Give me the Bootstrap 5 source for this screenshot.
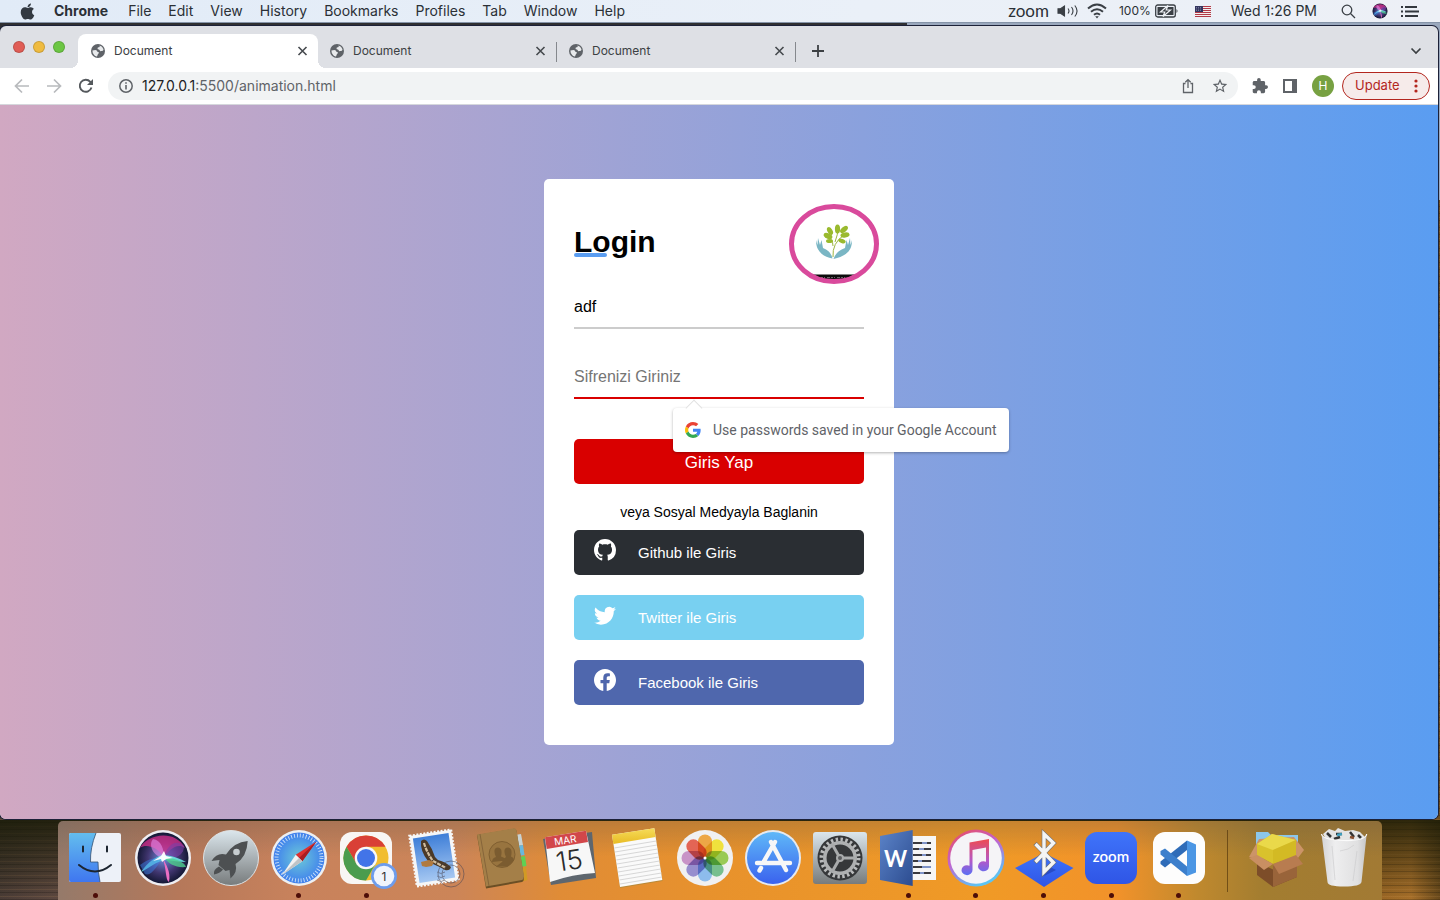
<!DOCTYPE html>
<html lang="tr">
<head>
<meta charset="utf-8">
<meta name="viewport" content="width=device-width, initial-scale=1">
<title>Document</title>
<link href="https://cdn.jsdelivr.net/npm/bootstrap@5.3.0/dist/css/bootstrap.min.css" rel="stylesheet">
<style>
  :root { --ui: Inter, "Liberation Sans", sans-serif; --page: "Liberation Sans", Arial, sans-serif; }
  body { font-family: var(--ui); background: #3a2a1c; }
  svg { display: block; flex: none; }
  button { font-family: inherit; }

  .desktop {
    background:
      linear-gradient(#2f2f31, #2f2f31) 0 0 / 63% 60px no-repeat,
      linear-gradient(#9aa8bd, #9aa8bd) 0 0 / 100% 200px no-repeat,
      linear-gradient(180deg, rgba(24,26,6,.85), rgba(24,26,6,0)) 0 100% / 100% 80px no-repeat,
      repeating-linear-gradient(0deg, rgba(0,0,0,.2) 0 1px, transparent 1px 3px, rgba(255,190,120,.1) 3px 4px, transparent 4px 7px),
      linear-gradient(90deg, #4a3c36 0, #5d4840 4%, #8d6a50 20%, #7a5016 90%, #a8702a 98%, #6a4a1c 100%);
  }

  /* menu bar */
  .menubar { height: 23px; background: linear-gradient(90deg, #e1ebf7, #eaf0f8 60%, #edf0f6); border-bottom: 1px solid #8594a8; font-size: 14px; line-height: 22px; color: #2b3036; }
  .menubar a { color: inherit; text-decoration: none; }
  .menus { gap: 17px; }
  .apple-menu { padding-right: 2px; }
  .app-name { font-weight: 700; padding-right: 3px; }
  .zoom-word { font-family: Lato, sans-serif; font-size: 17px; line-height: 20px; }
  .charge { font-size: 12px; }

  /* browser window */
  .browser { margin: 3px 2px 2px 0; border-radius: 6px; background: #dee0e5; overflow: hidden; box-shadow: 0 0 0 1px #1c2138; }
  .tabstrip { height: 42px; }
  .lights { width: 78px; padding: 15px 0 0 13px; gap: 8px; }
  .light { width: 12px; height: 12px; border-radius: 50%; border: 1px solid rgba(0,0,0,.15); }
  .tab-item { width: 239px; height: 34px; padding: 0 10px 0 13px; gap: 9px; font-size: 12px; color: #3c4043; position: relative; }
  .tab-item.current { background: #fff; border-radius: 8px 8px 0 0; width: 240px; margin-right: -1px; }
  .tab-item.current::before, .tab-item.current::after { content: ""; position: absolute; bottom: 0; width: 8px; height: 8px; }
  .tab-item.current::before { left: -8px; background: radial-gradient(circle at 0 0, transparent 8px, #fff 8px); }
  .tab-item.current::after { right: -8px; background: radial-gradient(circle at 100% 0, transparent 8px, #fff 8px); }
  .tab-item.ruled::after { content: ""; position: absolute; right: -1px; top: 8px; width: 1px; height: 20px; background: #85888d; }
  .bare { border: 0; background: none; padding: 0; color: #45494d; display: flex; align-items: center; justify-content: center; }

  .toolbar { height: 37px; background: #fff; border-bottom: 1px solid #d5d7dc; padding: 4px 8px 4px 14px; }
  .omnibox { height: 28px; border-radius: 14px; background: #f1f3f4; padding: 0 10px; margin-left: 14px; }
  .omnibox .url { font-size: 14px; color: #5f6368; line-height: 28px; }
  .omnibox .host { color: #202124; }
  .actions { gap: 15px; padding-left: 14px; }
  .avatar { width: 22px; height: 22px; border-radius: 50%; background: #77a142; color: #fff; font-size: 12px; }
  .update { width: 88px; height: 28px; border: 1px solid #b3261e; border-radius: 14px; background: #f6ebea; color: #b3261e; font-size: 13px; padding: 0 8px 0 12px; }

  /* login page */
  .viewport { background: linear-gradient(90deg, #d1a8c2 0, #8aa1dd 60%, #5a9df1 100%); font-family: var(--page); padding: 24px 0; }
  .login-box { width: 350px; padding: 45px 30px 40px; border-radius: 5px; background: #fff; position: relative; color: #000; }
  .login-title { font-size: 30px; font-weight: 700; line-height: 36px; margin: 0 0 27px; position: relative; }
  .login-title::before { content: ""; position: absolute; left: 0; bottom: 3px; width: 33px; height: 4px; border-radius: 3px; background: #5a9df1; }
  .brand-mark { position: absolute; top: 25px; right: 15px; width: 90px; height: 80px; }
  .line-field { display: block; width: 100%; height: 42px; border: 0; border-bottom: 2px solid #ccc; padding: 0; font-size: 16px; color: #000; outline: 0; background: none; border-radius: 0; }
  .line-field::placeholder { color: #757575; opacity: 1; }
  .second { margin: 28px 0 40px; position: relative; }
  .second .line-field { border-color: #d90000; }
  .submit { height: 45px; border: 0; border-radius: 5px; background: #d90000; color: #fff; font-size: 17px; padding: 2px 0 0; }
  .or-text { font-size: 14px; line-height: 20px; margin: 18px 0 8px; }
  .socials { gap: 20px; }
  .social { height: 45px; border-radius: 5px; color: #fff; text-decoration: none; font-size: 15px; padding: 2px 20px 0; gap: 22px; }
  .social:hover { color: #fff; }
  .social svg { margin-bottom: 8px; }
  .github { background: #2a2e33; } .twitter { background: #78d0f1; } .facebook { background: #4f67ad; }
  .pass-tip { position: absolute; left: 99px; top: 51px; width: 336px; height: 44px; border-radius: 4px; background: #fff; font-family: Roboto, var(--ui); font-size: 14px; color: #5f6368; padding: 0 12px; gap: 12px; box-shadow: 0 1px 3px rgba(0,0,0,.3); white-space: nowrap; z-index: 2; }
  .pass-tip::before { content: ""; position: absolute; left: 15px; top: -6px; width: 12px; height: 12px; background: #fff; border: solid #e2e2e2; border-width: 1px 0 0 1px; transform: rotate(45deg); }

  /* dock */
  .dock { width: 92%; padding: 5px 4px 2px; border-radius: 5px 5px 0 0; background: linear-gradient(180deg, rgba(90,80,70,.28), transparent 45%), linear-gradient(90deg, #957a6a 0, #b5785a 9%, #c8825c 18%, #cc8558 30%, #e08c36 38%, #e8922c 50%, #f09a26 70%, #f2922a 80%, #c0892e 86%, #a37d30 91%, #a27a34 100%); }
  .dock-cell { flex: 1 1 0; min-width: 0; }
  .dock-cell button { display: block; border: 0; background: none; padding: 0; }
  .dot { width: 5px; height: 5px; border-radius: 50%; margin-top: 3px; }
  .running .dot { background: #4d0d08; }
  .divider { width: 30px; padding: 4px 0 6px; }
  .divider span { width: 1px; background: rgba(80,50,10,.65); }
</style>
</head>
<body>
<svg width="0" height="0" class="position-absolute" aria-hidden="true">
  <defs>
    <symbol id="globe" viewBox="0 0 14 14"><circle cx="7" cy="7" r="7" fill="#5f6368"/><path d="M1.400 6.500L4.500 6q1.600.2 1.900 1.700l1.400.6q.4 1-.8 1.600l-1 2.500q-1.600.2-2.700-1.100Q1.300 9.500 1.400 6.500z" fill="#e8eaec"/><path d="M8.500 1.500q3 .7 4 3.700l-.5 1.600-2.700.4-1-1.500L6.500 5l.3-1.500 1.900-.6z" fill="#e8eaec"/></symbol>
    <symbol id="close" viewBox="0 0 10 10"><path d="M1 1l8 8M9 1L1 9" stroke="#45494d" stroke-width="1.600"/></symbol>
    <symbol id="siri" viewBox="0 0 64 64">
      <circle cx="32" cy="32" r="28" fill="#efeef2"/><circle cx="32" cy="32" r="25.500" fill="url(#siriBg)"/>
      <path d="M9 22C16 8 44 3 54 22 46 16 38 24 33 31 25 20 15 18 9 22z" fill="#d82f8c" opacity=".75"/>
      <path d="M22 13C30 14 34 24 32 32 22 30 17 19 22 13z" fill="#e58bea" opacity=".6"/>
      <path d="M32 31C38 17 45 13 53 20 53 30 43 34 32 31z" fill="#7a3fa8" opacity=".6"/>
      <path d="M10 46C17 36 25 30 33 29 42 30 50 33 55 36 46 36 39 34 33 34 25 36 18 42 10 46z" fill="#6cf0e6" opacity=".85"/>
      <path d="M31 31C35 38 40 46 38 56 34 54 36 42 31 31z" fill="#ec6fc4"/>
      <path d="M33 31C43 32 54 36 55 41 45 42 37 38 33 31z" fill="#4fd08f" opacity=".8"/>
      <path d="M9 39C18 32 27 31 32 31 28 37 21 51 14 48z" fill="#3c7fe8" opacity=".5"/>
      <path d="M33 25l2 5 7 2-7 1-4 3-1-3-8 2 8-5z" fill="#fff" opacity=".95"/>
    </symbol>
    <radialGradient id="siriBg"><stop offset="0" stop-color="#6e8fe0"/><stop offset=".6" stop-color="#40356f"/><stop offset="1" stop-color="#141835"/></radialGradient>
    <linearGradient id="finderL" x2="0" y2="1"><stop stop-color="#63bdee"/><stop offset="1" stop-color="#3f76f0"/></linearGradient>
    <linearGradient id="grey" x2="0" y2="1"><stop stop-color="#dbe6ec"/><stop offset="1" stop-color="#777b7c"/></linearGradient>
    <radialGradient id="safari"><stop stop-color="#6cc9d8"/><stop offset="1" stop-color="#3f7fee"/></radialGradient>
    <linearGradient id="sky" x2="0" y2="1"><stop stop-color="#3f7fd8"/><stop offset="1" stop-color="#a6c8f2"/></linearGradient>
    <linearGradient id="yellow" x2="0" y2="1"><stop stop-color="#f6dc5a"/><stop offset="1" stop-color="#e8bb24"/></linearGradient>
    <linearGradient id="blue" x2="0" y2="1"><stop stop-color="#5fb8f8"/><stop offset="1" stop-color="#3a62ee"/></linearGradient>
    <linearGradient id="zoomBlue" x2="0" y2="1"><stop stop-color="#3f74fa"/><stop offset="1" stop-color="#2f55e6"/></linearGradient>
    <linearGradient id="word" x2="1" y2="1"><stop stop-color="#5b83c8"/><stop offset="1" stop-color="#2c4c90"/></linearGradient>
    <linearGradient id="ring" x2=".5" y2="1"><stop stop-color="#ee4a52"/><stop offset=".5" stop-color="#c163d0"/><stop offset="1" stop-color="#5cc4f4"/></linearGradient>
    <linearGradient id="note" x2="0" y2="1"><stop stop-color="#ee4c50"/><stop offset=".6" stop-color="#b458c8"/><stop offset="1" stop-color="#5a70f4"/></linearGradient>
    <linearGradient id="bin" x2="1"><stop stop-color="#d4d4d6"/><stop offset=".3" stop-color="#eeeeef"/><stop offset=".8" stop-color="#e0e0e1"/><stop offset="1" stop-color="#c6c6c8"/></linearGradient>
  </defs>
</svg>

<div class="desktop d-flex flex-column min-vh-100">
  <header class="menubar d-flex align-items-center justify-content-between">
    <nav class="menus d-flex align-items-center" aria-label="Menu bar">
      <a href="#" class="apple-menu ms-3 ps-1" aria-label="Apple"><svg width="15" height="17" viewBox="0 20 384 472"><path fill="#333a42" d="M318.700 268.700c-.2-36.700 16.400-64.400 50-84.800-18.800-26.900-47.200-41.700-84.700-44.600-35.500-2.800-74.300 20.700-88.500 20.700-15 0-49.400-19.700-76.400-19.700C63.300 141.200 4 184.800 4 273.500q0 39.300 14.400 81.200c12.800 36.700 59 126.700 107.200 125.200 25.200-.6 43-17.900 75.800-17.900 31.800 0 48.300 17.900 76.400 17.900 48.600-.7 90.400-82.500 102.600-119.300-65.200-30.700-61.700-90-61.700-91.900zm-56.600-164.200c27.300-32.400 24.800-61.900 24-72.500-24.100 1.400-52 16.400-67.900 34.900-17.500 19.800-27.800 44.300-25.600 71.900 26.100 2 49.900-11.400 69.500-34.300z"/></svg></a>
      <a href="#" class="app-name">Chrome</a>
      <a href="#">File</a><a href="#">Edit</a><a href="#">View</a><a href="#">History</a><a href="#">Bookmarks</a><a href="#">Profiles</a><a href="#">Tab</a><a href="#">Window</a><a href="#">Help</a>
    </nav>
    <div class="d-flex align-items-center pe-3">
      <span class="zoom-word">zoom</span>
      <svg class="ms-2" width="22" height="16" viewBox="0 0 22 16" fill="none" stroke="#3a3f45" stroke-width="1.100"><path d="M1 5.800h2.500L7.500 3v10l-4-2.800H1z" fill="#3a3f45"/><path d="M11 5.500q2 2.500 0 5M14.500 4q3 4 0 8M17.800 2.500q4.500 5.500 0 11"/></svg>
      <svg class="ms-2" width="20" height="16" viewBox="0 0 20 16" fill="none" stroke="#3a3f45" stroke-width="2"><path d="M1 5.500q9-8 18 0M4 8.700q6-5 12 0M7 11.700q3-2.500 6 0"/><path d="M8.200 13.200h3.600L10 15.500z" fill="#3a3f45" stroke="none"/></svg>
      <span class="charge ms-2 ps-1">100%</span>
      <svg class="ms-1" width="24" height="14" viewBox="0 0 24 14"><rect x=".7" y="1" width="19.600" height="12" rx="2" fill="none" stroke="#3a3f45" stroke-width="1.300"/><rect x="2.500" y="3" width="16" height="8" fill="#3a3f45"/><path d="M13 1.500L5.500 8h4.300L8 12.500 15.500 6h-4.300z" fill="#3a3f45" stroke="#eef1f6" stroke-width="1.200"/><path d="M21.500 5q2 2 0 4" fill="#3a3f45"/></svg>
      <svg class="ms-3" width="16" height="11" viewBox="0 0 16 11"><path fill="#f3eeee" d="M0 0h16v11H0z"/><path d="M0 .5h16M0 2.500h16M0 4.500h16M0 6.500h16M0 8.500h16M0 10.500h16" stroke="#b23a48"/><path fill="#34365f" d="M0 0h8v6H0z"/><path d="M1 1.500h6M1 3h6M1 4.500h6" stroke="#9da0bd" stroke-width=".6" stroke-dasharray="1 1"/></svg>
      <span class="ms-3 ps-1">Wed 1:26 PM</span>
      <svg class="ms-4" width="15" height="15" viewBox="0 0 15 15" fill="none" stroke="#3a3f45" stroke-width="1.300"><circle cx="6" cy="6" r="4.800"/><path d="M9.500 9.500L14 14"/></svg>
      <svg class="ms-3" width="16" height="16" viewBox="5 5 54 54"><use href="#siri" width="64" height="64"/></svg>
      <svg class="ms-2 ps-1" width="24" height="13" viewBox="0 0 20 13" stroke="#33383e" stroke-width="1.900"><path d="M1 2h2M1 6.500h2M1 11h2M5 2h12M5 6.500h14M5 11h13"/></svg>
      <span class="pe-1"></span>
    </div>
  </header>

  <main class="browser flex-grow-1 d-flex flex-column">
    <div class="tabstrip d-flex">
      <div class="lights d-flex"><span class="light" style="background:#e05d56"></span><span class="light" style="background:#efbb40"></span><span class="light" style="background:#6cc644"></span></div>
      <div class="d-flex align-items-end">
        <div class="tab-item current d-flex align-items-center"><svg width="14" height="14"><use href="#globe"/></svg><span class="flex-grow-1">Document</span><button class="bare" aria-label="Close tab"><svg width="11" height="10"><use href="#close"/></svg></button></div>
        <div class="tab-item ruled d-flex align-items-center"><svg width="14" height="14"><use href="#globe"/></svg><span class="flex-grow-1">Document</span><button class="bare" aria-label="Close tab"><svg width="11" height="10"><use href="#close"/></svg></button></div>
        <div class="tab-item ruled d-flex align-items-center"><svg width="14" height="14"><use href="#globe"/></svg><span class="flex-grow-1">Document</span><button class="bare" aria-label="Close tab"><svg width="11" height="10"><use href="#close"/></svg></button></div>
      </div>
      <button class="bare ms-3 mt-2" aria-label="New tab"><svg width="14" height="14" viewBox="0 0 14 14"><path d="M7 1v12M1 7h12" stroke="#3c4043" stroke-width="1.800"/></svg></button>
      <button class="bare ms-auto me-3 mt-2" aria-label="Search tabs"><svg width="12" height="8" viewBox="0 0 12 8" fill="none"><path d="M1.500 1.500L6 6l4.500-4.500" stroke="#3c4043" stroke-width="1.700"/></svg></button>
    </div>

    <div class="toolbar d-flex align-items-center">
      <button class="bare" aria-label="Back"><svg width="16" height="16" viewBox="0 0 16 16" fill="none" stroke="#b8babd" stroke-width="1.700"><path d="M15 8H2M8 1.500L1.500 8 8 14.500"/></svg></button>
      <button class="bare ms-3" aria-label="Forward"><svg width="16" height="16" viewBox="0 0 16 16" fill="none" stroke="#b8babd" stroke-width="1.700"><path d="M1 8h13M8 1.500L14.500 8 8 14.500"/></svg></button>
      <button class="bare ms-3" aria-label="Reload"><svg width="16" height="16" viewBox="0 0 16 16" fill="none"><path d="M13.500 9.500A6 6 0 1 1 12.300 3.800L14 5.500" stroke="#55595d" stroke-width="1.900"/><path d="M15 1v6H9z" fill="#55595d"/></svg></button>
      <div class="omnibox flex-grow-1 d-flex align-items-center">
        <svg width="16" height="16" viewBox="0 0 16 16"><circle cx="8" cy="8" r="6.200" fill="none" stroke="#5f6368" stroke-width="1.500"/><path d="M8 7v4.500M8 4.200v1.600" stroke="#5f6368" stroke-width="1.600"/></svg>
        <a href="#" class="url ms-2 me-auto text-decoration-none"><span class="host">127.0.0.1</span>:5500/animation.html</a>
        <button class="bare" aria-label="Share"><svg width="16" height="16" viewBox="0 0 16 16" fill="none" stroke="#5f6368" stroke-width="1.300"><path d="M5.500 5.500h-2v9h9v-9h-2M8 10V1.800M5.300 4.300L8 1.600l2.700 2.700"/></svg></button>
        <button class="bare ms-3" aria-label="Bookmark"><svg width="16" height="16" viewBox="1 1 22 22"><path fill="#5f6368" d="M22 9.240l-7.190-.62L12 2 9.190 8.630 2 9.240l5.460 4.730L5.820 21 12 17.270 18.180 21l-1.630-7.030L22 9.240zM12 15.400l-3.760 2.270 1-4.280-3.320-2.880 4.380-.38L12 6.100l1.710 4.040 4.380.38-3.320 2.880 1 4.280L12 15.400z"/></svg></button>
      </div>
      <div class="actions d-flex align-items-center">
        <button class="bare" aria-label="Extensions"><svg width="16" height="16" viewBox="1 1 22 22"><path fill="#5f6368" d="M20.500 11H19V7c0-1.100-.9-2-2-2h-4V3.500a2.500 2.500 0 0 0-5 0V5H4c-1.100 0-2 .9-2 2v3.800h1.500a2.700 2.700 0 0 1 0 5.400H2V20c0 1.100.9 2 2 2h3.800v-1.500a2.700 2.700 0 0 1 5.400 0V22H17c1.100 0 2-.9 2-2v-4h1.500a2.500 2.500 0 0 0 0-5z"/></svg></button>
        <button class="bare" aria-label="Side panel"><svg width="14" height="14" viewBox="0 0 14 14"><path fill="#5f6368" d="M0 0h14v14H0zM2 2v10h7V2z" fill-rule="evenodd"/></svg></button>
        <button class="bare avatar text-white" aria-label="Profile">H</button>
      </div>
      <button class="update d-flex align-items-center justify-content-between ms-2">Update<svg width="10" height="14" viewBox="0 0 10 14" fill="#b3261e"><circle cx="5" cy="2" r="1.600"/><circle cx="5" cy="7" r="1.600"/><circle cx="5" cy="12" r="1.600"/></svg></button>
    </div>

    <section class="viewport flex-grow-1 d-flex align-items-center justify-content-center">
      <form class="login-box">
        <h1 class="login-title"><span class="position-relative">Login</span></h1>
        <svg class="brand-mark" viewBox="0 0 90 80" role="img" aria-label="Logo">
          <clipPath id="oval"><ellipse cx="45" cy="40" rx="41" ry="36"/></clipPath>
          <ellipse cx="45" cy="40" rx="42" ry="37" fill="#fff"/>
          <g clip-path="url(#oval)"><path d="M15 70.500h60V80H15z" fill="#0c0c0c"/><path d="M32 73.500h26" stroke="#666" stroke-width="1" stroke-dasharray="2 1 1 2 3 1"/></g>
          <ellipse cx="45" cy="40" rx="42.500" ry="37.500" fill="none" stroke="#d94a9c" stroke-width="5"/>
          <g fill="#7ab6c4"><path d="M27 36l1.500 5 .5-7 2 7 1.500-5 1.500 8q8 3 9.500 10.500-9-1.500-13-7-3.500-4-3.500-11.500z"/><path d="M63 36l-1.500 5-.5-7-2 7-1.500-5-1.500 8q-9 3-11.500 11 10-2 15-7.500 3.500-4 3.500-11.500z"/></g>
          <path d="M44 53q-1-14 11-22M44 42q0-8-8-11M46 38q3-8 3-13" stroke="#9db540" fill="none" stroke-width="1"/>
          <g fill="#9aba2e"><ellipse cx="48.500" cy="25" rx="2.600" ry="4.500"/><ellipse cx="41" cy="27" rx="2.500" ry="4.200" transform="rotate(-30 41 27)"/><ellipse cx="55" cy="25.500" rx="2.500" ry="4.600" transform="rotate(50 55 25.500)"/><ellipse cx="39" cy="32" rx="2.700" ry="4.600" transform="rotate(-65 39 32)"/><ellipse cx="56" cy="31" rx="2.600" ry="4.600" transform="rotate(80 56 31)"/><ellipse cx="40.500" cy="37" rx="2" ry="3.500" transform="rotate(-90 40.500 37)"/><ellipse cx="53" cy="37" rx="2" ry="3.800" transform="rotate(110 53 37)"/></g>
        </svg>
        <input class="line-field" type="text" value="adf" aria-label="Kullanici adi">
        <div class="second">
          <input class="line-field" type="password" placeholder="Sifrenizi Giriniz" aria-label="Sifre">
          <div class="pass-tip d-flex align-items-center">
            <svg width="16" height="16" viewBox="0 0 48 48"><path fill="#EA4335" d="M24 9.500c3.540 0 6.710 1.220 9.210 3.600l6.850-6.850C35.900 2.380 30.470 0 24 0 14.620 0 6.510 5.380 2.560 13.220l7.980 6.190C12.430 13.720 17.740 9.500 24 9.500z"/><path fill="#4285F4" d="M46.980 24.550c0-1.570-.15-3.090-.38-4.550H24v9.020h12.940c-.58 2.960-2.260 5.480-4.780 7.180l7.730 6c4.510-4.180 7.090-10.360 7.090-17.650z"/><path fill="#FBBC05" d="M10.530 28.590c-.48-1.450-.76-2.990-.76-4.590s.27-3.140.76-4.590l-7.980-6.190C.92 16.460 0 20.120 0 24c0 3.880.92 7.540 2.560 10.780l7.970-6.190z"/><path fill="#34A853" d="M24 48c6.480 0 11.930-2.130 15.890-5.810l-7.730-6c-2.150 1.450-4.920 2.300-8.160 2.300-6.260 0-11.570-4.220-13.470-9.910l-7.980 6.190C6.510 42.620 14.620 48 24 48z"/></svg>
            <span>Use passwords saved in your Google Account</span>
          </div>
        </div>
        <button type="submit" class="submit d-block w-100">Giris Yap</button>
        <p class="or-text text-center">veya Sosyal Medyayla Baglanin</p>
        <div class="socials d-flex flex-column">
          <a href="#" class="social github d-flex align-items-center"><svg width="22" height="22" viewBox="0 0 16 16" fill="#fff"><path d="M8 0C3.580 0 0 3.580 0 8c0 3.540 2.290 6.530 5.470 7.590.4.07.55-.17.55-.38 0-.19-.01-.82-.01-1.490-2.010.37-2.530-.49-2.690-.94-.09-.23-.48-.94-.82-1.130-.28-.15-.68-.52-.01-.53.63-.01 1.080.58 1.230.82.72 1.210 1.870.87 2.330.66.07-.52.28-.87.51-1.070-1.780-.2-3.640-.89-3.640-3.950 0-.87.31-1.590.82-2.150-.08-.2-.36-1.020.08-2.120 0 0 .67-.21 2.200.82.64-.18 1.320-.27 2-.27s1.360.09 2 .27c1.530-1.040 2.200-.82 2.200-.82.44 1.100.16 1.920.08 2.120.51.56.82 1.270.82 2.150 0 3.070-1.870 3.750-3.650 3.950.29.25.54.73.54 1.480 0 1.070-.01 1.930-.01 2.200 0 .21.15.46.55.38A8.010 8.010 0 0 0 16 8c0-4.420-3.580-8-8-8z"/></svg>Github ile Giris</a>
          <a href="#" class="social twitter d-flex align-items-center"><svg width="22" height="22" viewBox="0 0 16 16" fill="#fff"><path d="M5.026 15c6.038 0 9.341-5.003 9.341-9.334 0-.14 0-.282-.006-.422A6.685 6.685 0 0 0 16 3.542a6.658 6.658 0 0 1-1.889.518 3.301 3.301 0 0 0 1.447-1.817 6.533 6.533 0 0 1-2.087.793A3.286 3.286 0 0 0 7.875 6.030a9.325 9.325 0 0 1-6.767-3.429 3.289 3.289 0 0 0 1.018 4.382A3.323 3.323 0 0 1 .64 6.575v.045a3.288 3.288 0 0 0 2.632 3.218 3.203 3.203 0 0 1-.865.115 3.230 3.230 0 0 1-.614-.057 3.283 3.283 0 0 0 3.067 2.277A6.600 6.600 0 0 1 .78 13.580a6.320 6.320 0 0 1-.78-.045A9.344 9.344 0 0 0 5.026 15z"/></svg>Twitter ile Giris</a>
          <a href="#" class="social facebook d-flex align-items-center"><svg width="22" height="22" viewBox="0 0 16 16" fill="#fff"><path d="M16 8.049c0-4.446-3.582-8.050-8-8.050C3.580 0-.002 3.603-.002 8.050c0 4.017 2.926 7.347 6.750 7.951v-5.625h-2.030V8.050H6.750V6.275c0-2.017 1.195-3.131 3.022-3.131.876 0 1.791.157 1.791.157v1.980h-1.009c-.993 0-1.303.621-1.303 1.258v1.510h2.218l-.354 2.326H9.250V16c3.824-.604 6.750-3.934 6.750-7.951z"/></svg>Facebook ile Giris</a>
        </div>
      </form>
    </section>
  </main>

  <nav class="dock mx-auto d-flex" aria-label="Dock">
    <div class="dock-cell running d-flex flex-column align-items-center"><button aria-label="Finder"><svg width="64" height="64"><rect x="6" y="7" width="52" height="49" rx="2" fill="#edf1f8"/><path d="M8 7h25Q27 22 27.500 36H35q0 11 2 20H8a2 2 0 0 1-2-2V9a2 2 0 0 1 2-2z" fill="url(#finderL)"/><path d="M33 7Q27 22 27.500 36H35q0 11 2 20" fill="none" stroke="#35516f" stroke-width=".8"/><path d="M16 39q16 13 32 0M20 20.500v5M44 20.500v5" fill="none" stroke="#1c2530" stroke-width="2" stroke-linecap="round"/></svg></button><span class="dot"></span></div>
    <div class="dock-cell d-flex flex-column align-items-center"><button aria-label="Siri"><svg width="64" height="64"><use href="#siri"/></svg></button><span class="dot"></span></div>
    <div class="dock-cell d-flex flex-column align-items-center"><button aria-label="Launchpad"><svg width="64" height="64"><circle cx="32" cy="32" r="27.500" fill="url(#grey)" stroke="#dfe3e5"/><path d="M48.700 15Q35 16 27 28.500 18 26 12.500 35l8-1-1 5 7 6 4-1 1 8.500Q39 46 36.500 38 48 31 48.700 15z" fill="#4d5052"/><circle cx="37.500" cy="26" r="3.300" fill="#c7cdd0"/><path d="M20 40.500q-6 3-5 8 6-1 9-5z" fill="#4d5052"/></svg></button><span class="dot"></span></div>
    <div class="dock-cell running d-flex flex-column align-items-center"><button aria-label="Safari"><svg width="64" height="64"><circle cx="32" cy="32" r="28" fill="#eef0f2"/><circle cx="32" cy="32" r="25.500" fill="url(#safari)"/><circle cx="32" cy="32" r="22.500" fill="none" stroke="#e4f1fb" stroke-width="4" stroke-dasharray=".9 2.050" opacity=".85"/><path d="M49.500 15.500L28.700 28.700l6.600 6.600z" fill="#dd3030"/><path d="M49.500 15.500L32 32l3.300 3.300z" fill="#a81d22"/><path d="M15 49l13.700-20.300 6.600 6.600z" fill="#f2f2f2"/><path d="M15 49l17-17 3.300 3.300z" fill="#bfc3c6"/></svg></button><span class="dot"></span></div>
    <div class="dock-cell running d-flex flex-column align-items-center"><button aria-label="Chrome"><svg width="64" height="64"><rect x="6" y="6" width="52" height="52" rx="12" fill="#f8f6f4"/><circle cx="32" cy="32" r="22.500" fill="#f1bd2f"/><path d="M12.500 20.700A22.500 22.500 0 0 1 51.500 20.700H32L22.300 37.600z" fill="#d94036"/><path d="M12.500 20.700A22.500 22.500 0 0 0 32 54.500L41.700 37.600 22.300 37.600z" fill="#4b9c4e"/><circle cx="32" cy="32" r="11.300" fill="#f8f8f8"/><circle cx="32" cy="32" r="9" fill="#4274e8"/><circle cx="50" cy="50" r="13" fill="#6d9cec"/><circle cx="50" cy="50" r="10.300" fill="#f0f4fc"/><text x="50" y="54.500" font-family="Inter, sans-serif" font-size="12" text-anchor="middle" fill="#333">1</text></svg></button><span class="dot"></span></div>
    <div class="dock-cell d-flex flex-column align-items-center"><button aria-label="Mail"><svg width="64" height="64"><g transform="rotate(-8.500 32 32)"><rect x="11" y="6.500" width="42" height="51" fill="#f6f6f6" stroke="#f6f6f6" stroke-width="2.400" stroke-dasharray="2 1.500"/><rect x="14" y="9.500" width="36" height="45" fill="url(#sky)"/></g><path d="M19 15q3-3 6 0 5 7 8 16l3 3q8 2 13 7-1 4-6 3-7-4-12-6l-6 2-3-1 4-4q-8-10-7-20z" fill="#4b3927"/><path d="M22 17q3 10 9 18l13 7" stroke="#d0bda0" stroke-width="2.200" fill="none" stroke-dasharray="4 1"/><path d="M20 40l-1-4 8-2 5 2-2 4-6 1z" fill="#b07a40"/><g fill="none" stroke="#4a4654" opacity=".55"><circle cx="49" cy="48" r="13"/><circle cx="49" cy="48" r="9"/><path d="M35 46q4 3 8 0M35 50q4 3 8 0M35 54q4 3 8 0"/></g></svg></button><span class="dot"></span></div>
    <div class="dock-cell d-flex flex-column align-items-center"><button aria-label="Contacts"><svg width="64" height="64"><path d="M45 9l6-1 2 11-6 1z" fill="#c9d2d2"/><path d="M47 20l6-1 1.500 10-6 1z" fill="#69b8dd"/><path d="M49 31l6-1 1.500 10-6 1z" fill="#5fd054"/><path d="M50 42l6-1 1.500 13-7 2z" fill="#d29a24"/><path d="M7 9l37-6.300q2 0 2.500 2L54 52q0 3-2 4l-36 6.500z" fill="#6b4f25"/><path d="M7 8.500l37-6.300q2 0 2.500 2L54 50q0 3-2 4L16 60.500z" fill="#a47f48"/><path d="M10 8l9 52" stroke="#86653a" stroke-width="1"/><circle cx="32" cy="28.500" r="13" fill="#98743f" stroke="#805f31"/><path d="M22 36q0-4 4-5-4-9 2-9.500 5 .5 3 9 4 1 5 4M32 36q2-4 4-5-4-9 2-9.500 5 .5 3 9 3 1 3 4l-6 6H26z" fill="#7b5c30"/></svg></button><span class="dot"></span></div>
    <div class="dock-cell d-flex flex-column align-items-center"><button aria-label="Calendar"><svg width="64" height="64"><path d="M6 13l49-7 4 46-45 7z" fill="#5e666e"/><path d="M8 11.300L49 4.700 58 47q-22 1-45 9z" fill="#f7f7f7"/><path d="M8 11.300L49 4.700 51 16 9.700 23z" fill="#d2474a"/><g transform="rotate(-8.500 32 32)" font-family="Inter, sans-serif" text-anchor="middle"><text x="31" y="17.500" font-size="10" fill="#fff">MAR</text><text x="32" y="44" font-size="27" font-weight="300" fill="#2b2b2b">15</text></g></svg></button><span class="dot"></span></div>
    <div class="dock-cell d-flex flex-column align-items-center"><button aria-label="Notes"><svg width="64" height="64"><path d="M7 9L49.300 2.700 57.500 55 15 62z" fill="#b98a3a"/><path d="M7 8.700L49.300 2.300 57.300 54 15 61z" fill="#fafafa"/><g stroke="#d2d2d2" stroke-width=".9"><path d="M9.300 22l42-7M10 26l42-7M10.600 30l42-7M11.200 34l42-7M11.900 38l42-7M12.500 42l42-7M13.100 46l42-7M13.800 50l42-7M14.400 54l42-7M15 58l42-7"/></g><path d="M7 8.700L49.300 2.300 50.600 11 8.400 18z" fill="url(#yellow)"/></svg></button><span class="dot"></span></div>
    <div class="dock-cell d-flex flex-column align-items-center"><button aria-label="Photos"><svg width="64" height="64"><circle cx="32" cy="32" r="28" fill="#f0f0f1"/><g opacity=".92"><rect x="25" y="8.500" width="14" height="23" rx="7" fill="#eda138"/><rect x="25" y="8.500" width="14" height="23" rx="7" fill="#efe02e" transform="rotate(45 32 32)" style="mix-blend-mode:multiply"/><rect x="25" y="8.500" width="14" height="23" rx="7" fill="#92c748" transform="rotate(90 32 32)" style="mix-blend-mode:multiply"/><rect x="25" y="8.500" width="14" height="23" rx="7" fill="#6dbb86" transform="rotate(135 32 32)" style="mix-blend-mode:multiply"/><rect x="25" y="8.500" width="14" height="23" rx="7" fill="#85b8ec" transform="rotate(180 32 32)" style="mix-blend-mode:multiply"/><rect x="25" y="8.500" width="14" height="23" rx="7" fill="#8f86cc" transform="rotate(225 32 32)" style="mix-blend-mode:multiply"/><rect x="25" y="8.500" width="14" height="23" rx="7" fill="#c58cc4" transform="rotate(270 32 32)" style="mix-blend-mode:multiply"/><rect x="25" y="8.500" width="14" height="23" rx="7" fill="#e25a48" transform="rotate(315 32 32)" style="mix-blend-mode:multiply"/></g><circle cx="32" cy="32" r="1.500" fill="#fff"/></svg></button><span class="dot"></span></div>
    <div class="dock-cell d-flex flex-column align-items-center"><button aria-label="App Store"><svg width="64" height="64"><circle cx="32" cy="32" r="28" fill="#e6eaf0"/><circle cx="32" cy="32" r="26" fill="url(#blue)"/><path d="M34 16L22 37M20 42l-1.500 2.500M30 16l15 28M16 37h33" stroke="#f7f7f7" stroke-width="4.400" stroke-linecap="round"/></svg></button><span class="dot"></span></div>
    <div class="dock-cell d-flex flex-column align-items-center"><button aria-label="System Preferences"><svg width="64" height="64"><rect x="5" y="6" width="54" height="52" rx="3" fill="url(#grey)"/><circle cx="32" cy="32" r="22.500" fill="#36383a"/><circle cx="32" cy="32" r="18.500" fill="none" stroke="#b9bbbc" stroke-width="4" stroke-dasharray="2.400 2.440"/><circle cx="32" cy="32" r="15.200" fill="none" stroke="#aeb0b1" stroke-width="3.500"/><path d="M32 32h16M32 32l-8-14M32 32l-8 14" stroke="#a9abac" stroke-width="3"/><circle cx="32" cy="32" r="4" fill="#a9abac"/><circle cx="32" cy="32" r="2" fill="#5c5e60"/></svg></button><span class="dot"></span></div>
    <div class="dock-cell running d-flex flex-column align-items-center"><button aria-label="Word"><svg width="64" height="64"><path d="M34 10h26v44H34z" fill="#f6f6f6"/><path d="M37 17h9M51 17h4M37 23h6M48 23h7M37 29h9M50 29h5M37 35h5M46 35h9M37 41h9M37 47h7M48 47h7" stroke="#3a3a40" stroke-width="2.200"/><path d="M46 17h5M43 23h5M46 29h4M42 35h4M46 41h9M44 47h4" stroke="#7f94c8" stroke-width="2.200"/><path d="M4 10l32.700-6v56L4 54z" fill="url(#word)"/><text x="19.500" y="40.500" text-anchor="middle" font-family="Lato, sans-serif" font-weight="700" font-size="22" fill="#fff">W</text></svg></button><span class="dot"></span></div>
    <div class="dock-cell running d-flex flex-column align-items-center"><button aria-label="Music"><svg width="64" height="64"><circle cx="32" cy="32" r="28.500" fill="url(#ring)"/><circle cx="32" cy="32" r="25.800" fill="#f5f4f7"/><path d="M25.500 16.500L45 13v27.500a5.500 5 0 1 1-3-4.700V21.500l-13.500 2.600V44a5.500 5 0 1 1-3-4.300z" fill="url(#note)"/></svg></button><span class="dot"></span></div>
    <div class="dock-cell running d-flex flex-column align-items-center"><button aria-label="Bluetooth"><svg width="64" height="64"><path d="M3 42L32 27l29.500 15L32 61z" fill="url(#zoomBlue)"/><path d="M32 50l12-6-6-3z" fill="#1f3cae" opacity=".6"/><g fill="none"><path d="M23 17.500L41.500 36.500 32 46V8l9.500 9L23 36.500" stroke="#6d7078" stroke-width="4.600"/><path d="M23.500 18L41.500 36.500 32 46V8l9.500 9L23.500 36" stroke="#f4f4f4" stroke-width="3.400"/></g></svg></button><span class="dot"></span></div>
    <div class="dock-cell running d-flex flex-column align-items-center"><button aria-label="Zoom"><svg width="64" height="64"><rect x="6" y="6" width="52" height="52" rx="12" fill="url(#zoomBlue)"/><text x="32" y="36" text-anchor="middle" font-family="Lato, sans-serif" font-weight="600" font-size="15" fill="#fff">zoom</text></svg></button><span class="dot"></span></div>
    <div class="dock-cell running d-flex flex-column align-items-center"><button aria-label="Visual Studio Code"><svg width="64" height="64"><rect x="6" y="6" width="52" height="52" rx="12" fill="#fdfdfd"/><path d="M40 14.500V24L18 41.500l-4.500-3.500v-2.500z" fill="#2f6cb8"/><path d="M40 50v-9.500L18 22.500 13.500 25v3.500z" fill="#3c7fcc"/><path d="M40 14.500l9 4v28L40 50z" fill="#4b96e4"/></svg></button><span class="dot"></span></div>
    <div class="divider d-flex justify-content-center"><span></span></div>
    <div class="dock-cell d-flex flex-column align-items-center"><button aria-label="Downloads"><svg width="64" height="64"><path d="M11 6h12l3 3h27v22H11z" fill="#8cc7ea"/><path d="M4 31l10-18 35-2 10 13-9 12z" fill="#cc9468"/><path d="M12 36l17 8 23-9v16L28 61 12 49z" fill="#7d4d29"/><path d="M28 40l24-7v18L28 61z" fill="#99643a"/><path d="M12 18l15-10 24 6v16L28 38 12 29z" fill="#d9c22c"/><path d="M12 18l15-10 24 6-23 10z" fill="#ead94a"/><path d="M28 24v14l23-8V14z" fill="#cfb41f" opacity=".6"/><path d="M12 29l16 9-9 6L4 32z" fill="#c98f62"/><path d="M28 38l23-9 7 9-24 10z" fill="#b87c50"/></svg></button><span class="dot"></span></div>
    <div class="dock-cell d-flex flex-column align-items-center"><button aria-label="Trash"><svg width="64" height="64"><path d="M11 8l6-5 6 2 3-3 7 3 8-1 7 2 5 5-6 6H16z" fill="#e4e4e4"/><path d="M15 7l4 4M24 8h6M38 6l4 5M46 9l3 3M22 13l6-2" stroke="#333" stroke-width="2.500"/><path d="M25 9l5-1" stroke="#3fa0c0" stroke-width="2.500"/><path d="M38 11l4 1" stroke="#8c5030" stroke-width="2.500"/><path d="M9.500 8q1 6 22.500 6.500T54.700 8L49.500 56q-1 4.500-17.500 4.500T15.500 56z" fill="url(#bin)"/><path d="M9.500 8q1 6 22.500 6.500T54.700 8" fill="none" stroke="#fbfbfb" stroke-width="1.200"/><path d="M20 20l3 34M42 19q-5 5-14 6M45 25l-4 30" stroke="#c9c9cb" fill="none" opacity=".6"/></svg></button><span class="dot"></span></div>
  </nav>
</div>
<script src="https://cdn.jsdelivr.net/npm/bootstrap@5.3.0/dist/js/bootstrap.bundle.min.js"></script>
</body>
</html>
